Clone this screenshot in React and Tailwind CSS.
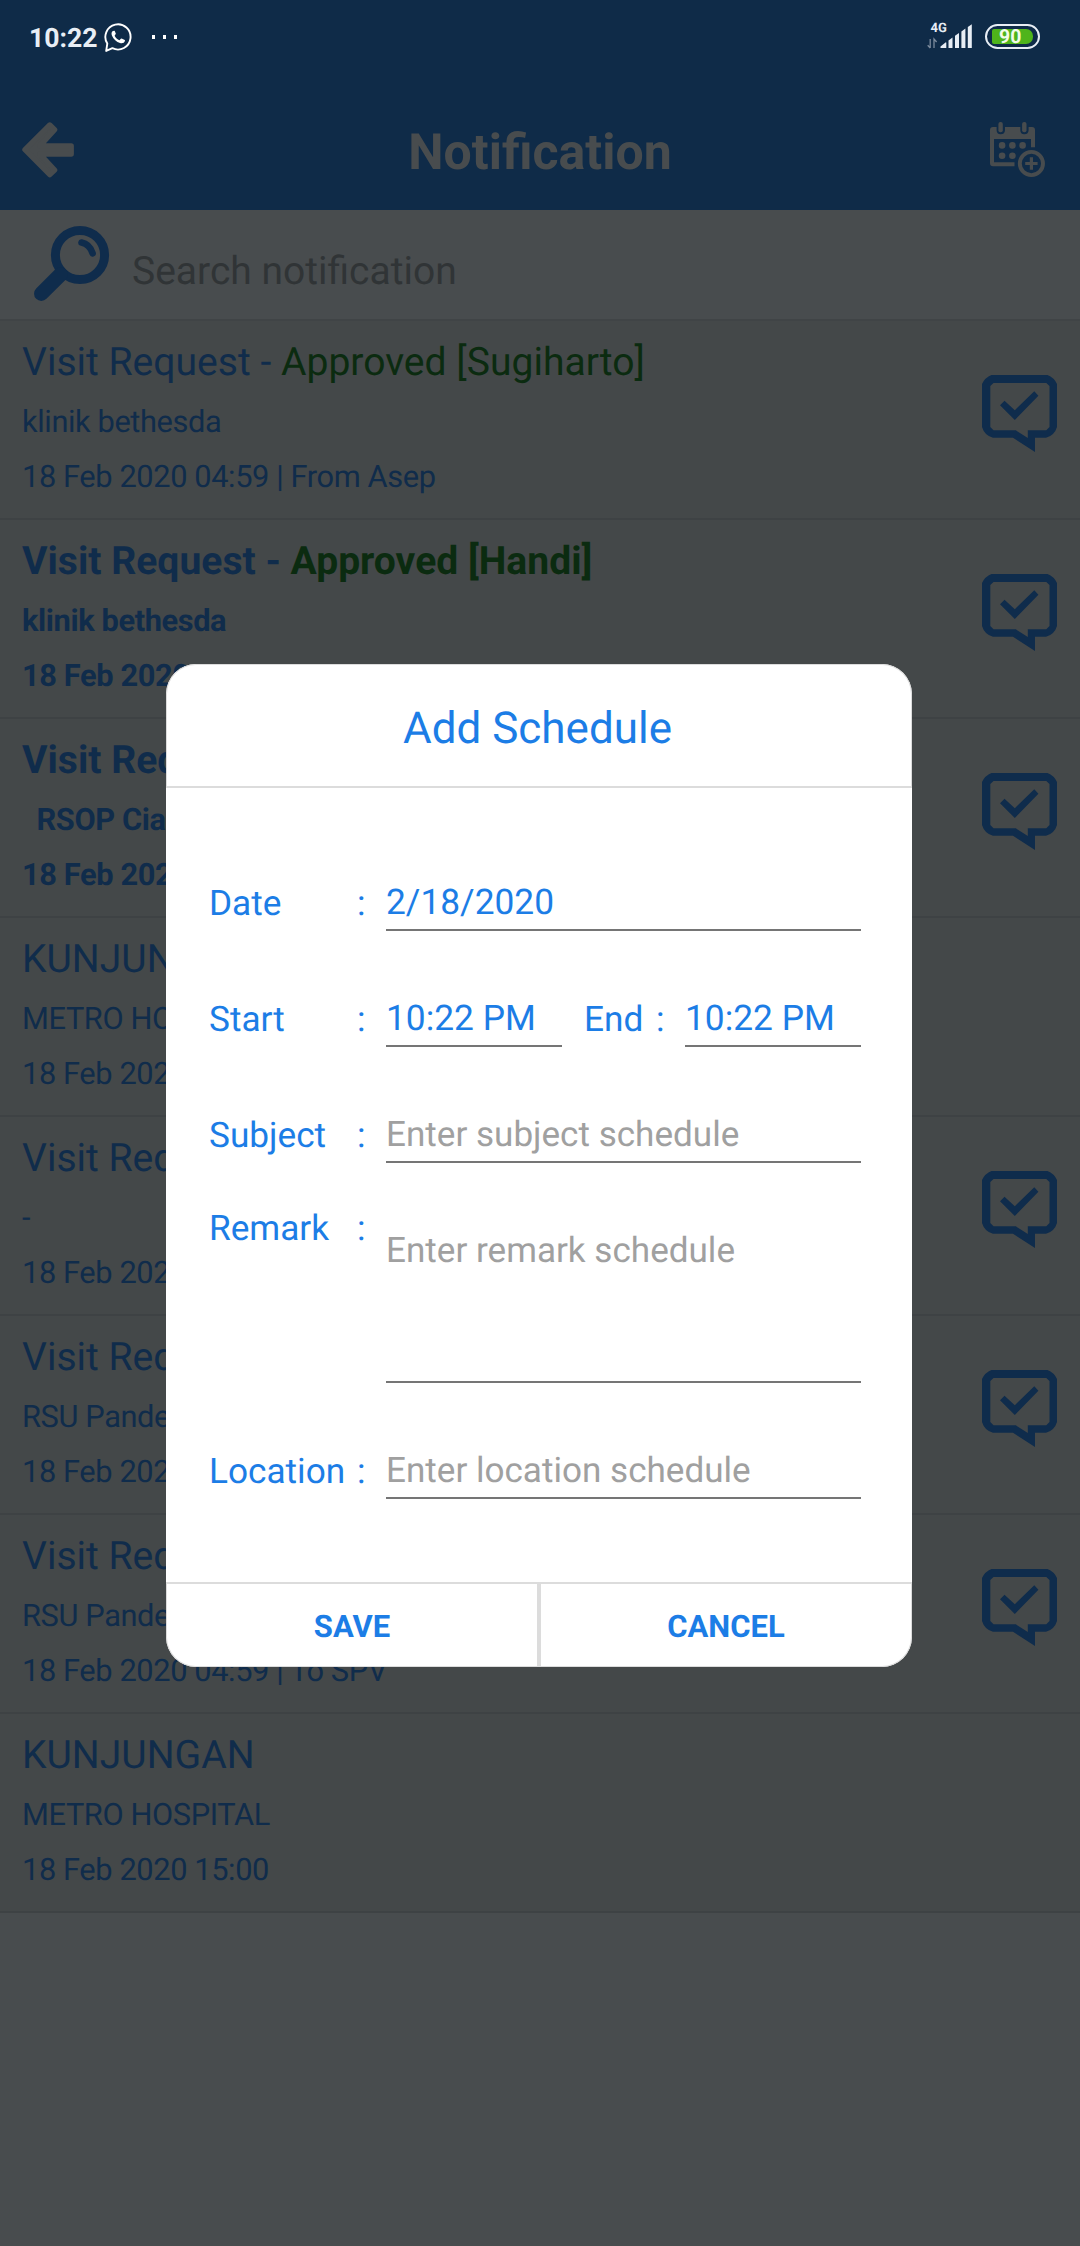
import React from "react";

const rows = [
  { title: "Visit Request - ", status: "Approved [Sugiharto]", sub: "klinik bethesda", date: "18 Feb 2020 04:59 | From Asep", icon: true },
  { title: "Visit Request - ", status: "Approved [Handi]", sub: "klinik bethesda", date: "18 Feb 2020", icon: true, unread: true },
  { title: "Visit Req", sub: "  RSOP Cia", date: "18 Feb 202", icon: true, unread: true },
  { title: "KUNJUN", sub: "METRO HO", date: "18 Feb 202" },
  { title: "Visit Req", sub: "-", date: "18 Feb 202", icon: true },
  { title: "Visit Req", sub: "RSU Pande", date: "18 Feb 202", icon: true },
  { title: "Visit Req", sub: "RSU Pande", date: "18 Feb 2020 04:59 | To SPV", icon: true },
  { title: "KUNJUNGAN", sub: "METRO HOSPITAL", date: "18 Feb 2020 15:00" },
];

function WhatsAppIcon() {
  return (
    <svg className="mt-[23px] ml-[5px] h-[30px] w-[28px] shrink-0" viewBox="0 0 28 30" fill="none">
      <path d="M2.2 27.9 L3.3 20.6 A12.6 12.6 0 1 1 8.4 25.2 Z" stroke="#fff" strokeWidth="1.9" strokeLinejoin="round" />
      <path d="M8.9 8 C7.4 8.9 7.2 10.9 8 12.7 C9.6 16.2 12.4 18.9 16 20.1 C18.3 20.8 20.5 19.9 21 17.8 L20.8 17 L17.6 15.4 L16.8 15.7 L15.5 17.2 C13.3 16.3 11.6 14.7 10.6 12.7 L11.7 11.1 L11.8 10.5 L10.6 7.8 Z" fill="#fff" />
    </svg>
  );
}

function SignalIcon() {
  return (
    <svg className="h-[25px] w-[46px]" viewBox="0 0 46 25">
      <path d="M3.2 15 V24 M0.7 21.3 L3.2 24 M7 24 V15 L9.6 18" stroke="#7b8a9c" strokeWidth="1.3" fill="none" />
      <path d="M13.5 24 V22.6 L18.5 18.5 Q19.3 18 19.3 19 V24 Z M21.5 24 V16.5 L25.5 13.4 V24 Z M28 24 V11.8 L32 9 V24 Z M34.4 24 V7.6 L38.4 4.6 V24 Z M40.8 24 V3 L44.8 .3 V24 Z" fill="#e8eef5" />
    </svg>
  );
}

function StatusBar() {
  return (
    <div className="flex h-[74px] items-start text-[#e8eef5]">
      <span className="mt-[23px] ml-[29px] w-[69.5px] text-[26.6px] leading-[31px] font-bold">10:22</span>
      <WhatsAppIcon />
      <div className="mt-[35px] ml-[20px] flex gap-[7.5px]">
        <i className="h-[4px] w-[3.5px] bg-white" />
        <i className="h-[4px] w-[3.5px] bg-white" />
        <i className="h-[4px] w-[3.5px] bg-white" />
      </div>
      <div className="relative mt-[24px] ml-auto">
        <span className="absolute top-[-4px] left-[3.5px] text-[13px] leading-[17px] font-bold">4G</span>
        <SignalIcon />
      </div>
      <div className="mt-[24px] mr-[40px] ml-[12px] flex h-[25px] w-[55px] items-center justify-center rounded-full border-[2px] border-[#e8eef5]">
        <div className="flex h-[15px] w-[41px] items-center rounded-l-[2px] rounded-r-[7px] bg-[#4fb41b] pl-[7px] text-[19.4px] leading-[15px] font-bold text-[#f2fbe9]">
          90
        </div>
      </div>
    </div>
  );
}

function BackIcon() {
  return (
    <svg className="h-[56px] w-[53px]" viewBox="0 0 53 56">
      <path d="M3 27.7 L27.8 3 L32.6 7.6 L17.8 24 H49.2 V32 H17.8 L32.6 48 L27.8 52.6 Z" fill="#484c4e" stroke="#484c4e" strokeWidth="5.4" strokeLinejoin="round" />
    </svg>
  );
}

function CalendarAddIcon() {
  return (
    <svg className="h-[56px] w-[56px]" viewBox="0 0 56 56">
      <g fill="#484c4e">
        <path fillRule="evenodd" d="M3 5 H6.6 V8 Q6.6 12.2 10.6 12.2 Q15 12.2 15 8 V5 H30.3 V8 Q30.3 12.2 34.3 12.2 Q38.6 12.2 38.6 8 V5 H42 Q45 5 45 8 V25.2 H41 V17 H4 V40.2 H24.5 V44.3 H3 Q0 44.3 0 41.3 V8 Q0 5 3 5 Z" />
        <rect x="8.4" y="0" width="4.4" height="10.3" rx="2" />
        <rect x="32.1" y="0" width="4.4" height="10.3" rx="2" />
        <circle cx="12.1" cy="23.4" r="3.3" />
        <circle cx="22.4" cy="23.4" r="3.3" />
        <circle cx="32.6" cy="23.4" r="3.3" />
        <circle cx="12.1" cy="33.7" r="3.3" />
        <circle cx="22.4" cy="33.7" r="3.3" />
      </g>
      <circle cx="41.4" cy="41.5" r="11.6" fill="none" stroke="#484c4e" strokeWidth="3.9" />
      <path d="M35.2 41.5 H47.6 M41.4 35.3 V47.7" stroke="#484c4e" strokeWidth="3.2" />
    </svg>
  );
}

function SearchIcon() {
  return (
    <svg className="mt-[15px] ml-[33px] h-[78px] w-[78px] shrink-0" viewBox="33 225 78 78" fill="none" stroke="#0f2c4c">
      <circle cx="80" cy="255" r="24.6" strokeWidth="9" />
      <path d="M60.5 274.5 L41.3 293.7" strokeWidth="14.5" strokeLinecap="round" />
      <path d="M81.5 242.6 Q89.5 244 92.6 253.3" strokeWidth="6.6" strokeLinecap="round" />
    </svg>
  );
}

function ApprovedIcon() {
  return (
    <svg className="mt-[54px] mr-[23px] h-[77px] w-[75px] shrink-0" viewBox="0 0 75 77" fill="#0f2c4c">
      <path
        fillRule="evenodd"
        d="M9.5 0 H65.5 Q72 2.5 75 9 V52 Q72.5 60.5 64 62.8 H53 V77 L31 62.8 H11 Q2.5 60.5 0 52 V9 Q3 2.5 9.5 0 Z M11.5 8 L8.3 11 V52 L11.5 55.3 H33.8 L45.8 63 V55.3 H64.3 L67.5 52 V11 L64.3 8 Z"
      />
      <path d="M18 30.3 L22.5 25.8 L32.8 35.2 L52.3 16.3 L56.4 20.7 L32.8 45 Z" />
    </svg>
  );
}

function Row({ row }) {
  return (
    <div className={"flex h-[199px] items-start justify-between overflow-hidden border-b-2 border-[#3e4244] bg-[#444849] pl-[22px] whitespace-pre text-[#102c4b] " + (row.unread ? "font-bold" : "font-normal")}>
      <div className="pt-[18px]">
        <div className="text-[39.1px] leading-[46px]">
          {row.title}
          {row.status && <span className="text-[#0b2b10]">{row.status}</span>}
        </div>
        <div className="mt-[19px] text-[30.8px] leading-[36px] tracking-[-0.4px]">{row.sub}</div>
        <div className="mt-[19px] text-[30.8px] leading-[36px] tracking-[-0.4px]">{row.date}</div>
      </div>
      {row.icon && <ApprovedIcon />}
    </div>
  );
}

function Label({ children }) {
  return (
    <div className="mb-1 flex h-[48px] w-[177px] shrink-0 text-[35.2px] leading-[48px]">
      <span className="w-[148px]">{children}</span>
      <span>:</span>
    </div>
  );
}

const field = "border-b-2 border-[#757575] pb-[3px] leading-[48px] whitespace-nowrap";

function Dialog() {
  return (
    <div className="absolute top-[664px] left-[166px] flex h-[1003px] w-[746px] flex-col overflow-hidden rounded-[30px] bg-white text-[#1c7de6]">
      <div className="h-[124px] rounded-t-[30px] border-x border-t border-b-2 border-[#dcdcdc] pt-[36px] pr-[3px] text-center text-[44px] leading-[54px]">
        Add Schedule
      </div>
      <div className="flex-1 pt-[90px] pr-[51px] pl-[43px]">
        <div className="flex items-start">
          <div className="pt-px"><Label>Date</Label></div>
          <div className={field + " flex-1 text-[35.3px]"}>2/18/2020</div>
        </div>
        <div className="mt-[63px] flex items-start">
          <div className="pt-px"><Label>Start</Label></div>
          <div className={field + " w-[176px] text-[35.3px]"}>10:22 PM</div>
          <div className="ml-[22px] flex flex-1 pt-px text-[35.2px] leading-[48px]">
            <span className="w-[72px]">End</span>
            <span>:</span>
          </div>
          <div className={field + " w-[176px] text-[35.3px]"}>10:22 PM</div>
        </div>
        <div className="mt-[63px] flex items-start">
          <div className="pt-px"><Label>Subject</Label></div>
          <div className={field + " flex-1 text-[35.1px] text-[#a0a0a0]"}>Enter subject schedule</div>
        </div>
        <div className="mt-[41px] flex h-[179px] items-start">
          <Label>Remark</Label>
          <div className={field + " h-full flex-1 pt-[22px] text-[35.1px] text-[#a0a0a0]"}>Enter remark schedule</div>
        </div>
        <div className="mt-[63px] flex items-start">
          <div className="pt-px"><Label>Location</Label></div>
          <div className={field + " flex-1 text-[35.1px] text-[#a0a0a0]"}>Enter location schedule</div>
        </div>
      </div>
      <div className="flex h-[85px] rounded-b-[30px] border-x border-t-2 border-b border-[#dcdcdc] text-center text-[31px] leading-[37px] font-bold">
        <div className="flex-1 border-r-4 border-[#dcdcdc] pt-[24px]">SAVE</div>
        <div className="w-[370px] pt-[24px]">CANCEL</div>
      </div>
    </div>
  );
}

export default function App() {
  return (
    <div className="relative h-[2246px] w-[1080px] overflow-hidden bg-[#484c4e] font-['Roboto',sans-serif] [text-rendering:geometricPrecision]">
      <header className="h-[210px] bg-[#0f2b48]">
        <StatusBar />
        <div className="grid h-[136px] grid-cols-[1fr_auto_1fr] items-start pt-[48px] pr-[34px] pl-[22px]">
          <BackIcon />
          <h1 className="mr-[-12px] pt-px text-[50px] leading-[60px] font-bold text-[#484c4e]">Notification</h1>
          <div className="flex justify-end"><CalendarAddIcon /></div>
        </div>
      </header>
      <div className="flex h-[111px] items-start border-b-2 border-[#404446]">
        <SearchIcon />
        <span className="mt-[37px] ml-[21px] text-[39px] leading-[48px] text-[#303436]">Search notification</span>
      </div>
      {rows.map((row, i) => (
        <Row key={i} row={row} />
      ))}
      <Dialog />
    </div>
  );
}
